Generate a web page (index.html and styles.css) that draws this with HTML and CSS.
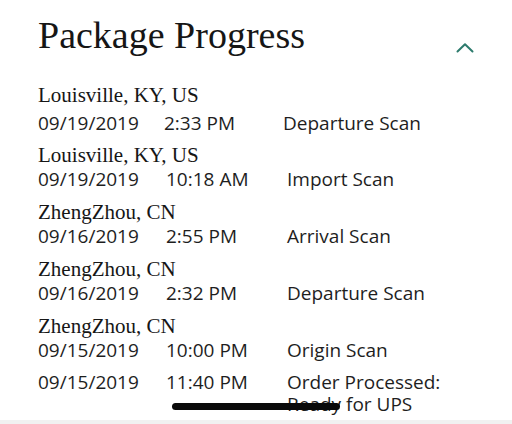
FILE: index.html
```html
<!DOCTYPE html>
<html lang="en">
<head>
<meta charset="utf-8">
<title>Package Progress</title>
<link rel="stylesheet" href="styles.css">
</head>
<body>
<div class="page">
  <header class="header">
    <h1 class="title">Package Progress</h1>
    <svg class="chevron" width="20" height="11" viewBox="0 0 20 11" aria-hidden="true">
      <path d="M2.5 9.5 L10 2.2 L17.5 9.5" fill="none" stroke="#2d7b6d" stroke-width="2" stroke-linecap="round" stroke-linejoin="round"/>
    </svg>
  </header>
  <section class="events">
    <div class="group group--first">
      <div class="city">Louisville, KY, US</div>
      <div class="row row--first"><span>09/19/2019</span><span>2:33 PM</span><span>Departure Scan</span></div>
    </div>
    <div class="group">
      <div class="city">Louisville, KY, US</div>
      <div class="row"><span>09/19/2019</span><span>10:18 AM</span><span>Import Scan</span></div>
    </div>
    <div class="group">
      <div class="city">ZhengZhou, CN</div>
      <div class="row"><span>09/16/2019</span><span>2:55 PM</span><span>Arrival Scan</span></div>
    </div>
    <div class="group">
      <div class="city">ZhengZhou, CN</div>
      <div class="row"><span>09/16/2019</span><span>2:32 PM</span><span>Departure Scan</span></div>
    </div>
    <div class="group">
      <div class="city">ZhengZhou, CN</div>
      <div class="row"><span>09/15/2019</span><span>10:00 PM</span><span>Origin Scan</span></div>
    </div>
    <div class="group">
      <div class="row row--last"><span>09/15/2019</span><span>11:40 PM</span><span>Order Processed: Ready for UPS</span></div>
    </div>
  </section>
  <div class="home-indicator"></div>
</div>
<div class="bottom-strip"></div>
</body>
</html>
```
FILE: styles.css
```css
html, body {
  margin: 0;
  padding: 0;
  background: #ffffff;
}

body {
  width: 512px;
  height: 424px;
  overflow: hidden;
  color: #1b1b1b;
}

.page {
  position: relative;
  height: 420px;
  overflow: hidden;
  padding-left: 38px;
  box-sizing: border-box;
}

.header {
  display: flex;
  justify-content: space-between;
  align-items: flex-start;
  padding-top: 13px;
  padding-right: 37px;
}

.title {
  margin: 0;
  font-family: "Liberation Serif", serif;
  font-weight: normal;
  font-size: 38px;
  line-height: 44px;
  color: #161616;
}

.chevron {
  display: block;
  margin-top: 29px;
}

.events {
  margin-top: 26px;
}

.group {
  margin-bottom: 9px;
}

.group--first {
  margin-bottom: 8px;
}

.city {
  font-family: "Liberation Serif", serif;
  font-size: 21px;
  line-height: 24px;
  color: #161616;
}

.row {
  display: grid;
  grid-template-columns: 128px 121px 160px;
  font-family: "Open Sans", sans-serif;
  font-size: 19px;
  line-height: 24px;
  color: #1e1e1e;
}

.row--first {
  margin-top: 4px;
  grid-template-columns: 126px 119px 160px;
}

.row--last {
  line-height: 22px;
}

.home-indicator {
  position: absolute;
  left: 172px;
  top: 403px;
  width: 168px;
  height: 7px;
  border-radius: 4px;
  background: #0a0a0a;
}

.bottom-strip {
  height: 4px;
  background: #f1f1f1;
}
```
